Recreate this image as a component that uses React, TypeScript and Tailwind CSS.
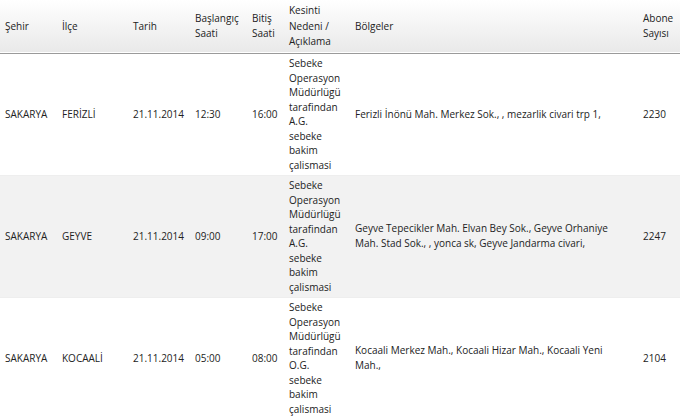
import React from "react";

const rows = [
  {
    sehir: "SAKARYA",
    ilce: "FERİZLİ",
    tarih: "21.11.2014",
    bas: "12:30",
    bit: "16:00",
    neden: ["Sebeke", "Operasyon", "Müdürlügü", "tarafindan", "A.G.", "sebeke", "bakim", "çalismasi"],
    bolge: ["Ferizli İnönü Mah. Merkez Sok., , mezarlik civari trp 1,"],
    abone: "2230",
  },
  {
    sehir: "SAKARYA",
    ilce: "GEYVE",
    tarih: "21.11.2014",
    bas: "09:00",
    bit: "17:00",
    neden: ["Sebeke", "Operasyon", "Müdürlügü", "tarafindan", "A.G.", "sebeke", "bakim", "çalismasi"],
    bolge: ["Geyve Tepecikler Mah. Elvan Bey Sok., Geyve Orhaniye", "Mah. Stad Sok., , yonca sk, Geyve Jandarma civari,"],
    abone: "2247",
  },
  {
    sehir: "SAKARYA",
    ilce: "KOCAALİ",
    tarih: "21.11.2014",
    bas: "05:00",
    bit: "08:00",
    neden: ["Sebeke", "Operasyon", "Müdürlügü", "tarafindan", "O.G.", "sebeke", "bakim", "çalismasi"],
    bolge: ["Kocaali Merkez Mah., Kocaali Hizar Mah., Kocaali Yeni", "Mah.,"],
    abone: "2104",
  },
];

const Lines = ({ lines }: { lines: string[] }) => (
  <>
    {lines.map((l, i) => (
      <div key={i} className="whitespace-nowrap">
        {l}
      </div>
    ))}
  </>
);

export default function App() {
  return (
    <div
      className="w-[680px] h-[419px] overflow-hidden bg-white text-[#222] text-[10px]"
      style={{ fontFamily: '"Open Sans", "Noto Sans", sans-serif' }}
    >
      <table className="w-[680px] table-fixed border-collapse">
        <colgroup>
          <col className="w-[57px]" />
          <col className="w-[71px]" />
          <col className="w-[62px]" />
          <col className="w-[57px]" />
          <col className="w-[37px]" />
          <col className="w-[66px]" />
          <col className="w-[288px]" />
          <col className="w-[42px]" />
        </colgroup>
        <thead>
          <tr className="h-[53px] bg-gradient-to-b from-white to-[#e9e9e9] border-b border-[#9a9a9a]">
            <th className="text-left font-normal align-middle pl-[5px] leading-[15.5px]">Şehir</th>
            <th className="text-left font-normal align-middle pl-[5px] leading-[15.5px]">İlçe</th>
            <th className="text-left font-normal align-middle pl-[5px] leading-[15.5px]">Tarih</th>
            <th className="text-left font-normal align-middle pl-[5px] leading-[15.5px]">
              <Lines lines={["Başlangıç", "Saati"]} />
            </th>
            <th className="text-left font-normal align-middle pl-[5px] leading-[15.5px]">
              <Lines lines={["Bitiş", "Saati"]} />
            </th>
            <th className="text-left font-normal align-middle pl-[5px] leading-[15.5px]">
              <Lines lines={["Kesinti", "Nedeni /", "Açıklama"]} />
            </th>
            <th className="text-left font-normal align-middle pl-[5px] leading-[15.5px]">Bölgeler</th>
            <th className="text-left font-normal align-middle pl-[5px] leading-[15.5px]">
              <Lines lines={["Abone", "Sayısı"]} />
            </th>
          </tr>
        </thead>
        <tbody>
          {rows.map((r, i) => (
            <tr
              key={i}
              className={`h-[122px] border-b border-[#eeeeee] ${i % 2 === 1 ? "bg-[#f2f2f2]" : "bg-white"}`}
            >
              <td className="pl-[5px] align-middle leading-[14px]">{r.sehir}</td>
              <td className="pl-[5px] align-middle leading-[14px]">{r.ilce}</td>
              <td className="pl-[5px] align-middle leading-[14px]">{r.tarih}</td>
              <td className="pl-[5px] align-middle leading-[14px]">{r.bas}</td>
              <td className="pl-[5px] align-middle leading-[14px]">{r.bit}</td>
              <td className="pl-[5px] align-middle leading-[14.5px]">
                <Lines lines={r.neden} />
              </td>
              <td className="pl-[5px] align-middle leading-[15px]">
                <Lines lines={r.bolge} />
              </td>
              <td className="pl-[5px] align-middle leading-[14px]">{r.abone}</td>
            </tr>
          ))}
        </tbody>
      </table>
    </div>
  );
}
